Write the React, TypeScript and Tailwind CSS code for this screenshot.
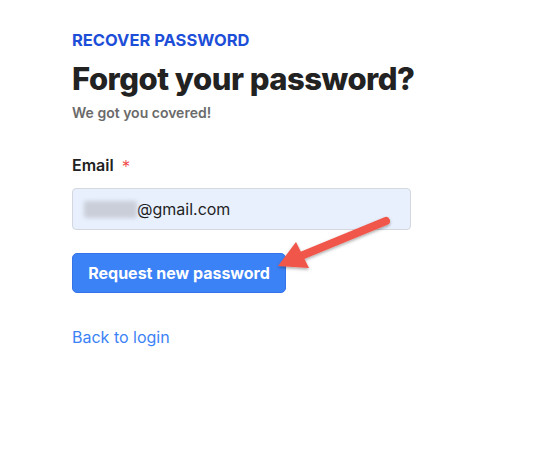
const App = () => {
  return (
    <div className="relative min-h-[454px] w-[550px] bg-white font-['Inter','Liberation_Sans',sans-serif]">
      <div className="flex w-[339px] flex-col ml-[72px] pt-[31px]">
        <p className="text-[16.5px] font-bold leading-[18px] text-[#1d4ed8]">RECOVER PASSWORD</p>
        <h1 className="mt-[10px] whitespace-nowrap text-[31px] font-extrabold leading-[40px] tracking-[-0.5px] text-[#222222]">
          Forgot your password?
        </h1>
        <p className="mt-[5px] text-[14px] font-semibold leading-[18px] text-[#6b6b6b]">We got you covered!</p>

        <label className="mt-[33px] flex h-[20px] items-center gap-[8px] text-[16px] font-semibold leading-[20px] text-[#222222]">
          Email <span className="translate-y-[2px] text-[17px] font-light leading-[20px] text-[#ef4444]">*</span>
        </label>
        <div className="mt-[13px] flex h-[42px] items-center rounded-[4px] border border-[#d4d8de] bg-[#e8f0fe] pl-[11px]">
          <span className="h-[17px] w-[53px] rounded-[2px] bg-[#c9ced8] blur-[2px]" />
          <span className="text-[16px] leading-[20px] text-[#1f1f1f]">@gmail.com</span>
        </div>

        <div className="mt-[23px]">
          <button className="h-[40px] w-[214px] rounded-[5px] border border-[#3574e8] bg-[#3b82f6] text-[16px] font-bold text-white">
            Request new password
          </button>
        </div>

        <a className="mt-[34px] text-[16px] leading-[20px] text-[#3b82f6]">Back to login</a>
      </div>

      <svg className="pointer-events-none absolute left-0 top-0" width="550" height="454">
        <defs>
          <filter id="sh" x="-20%" y="-20%" width="140%" height="140%">
            <feDropShadow dx="0" dy="1.5" stdDeviation="1.5" floodColor="#000" floodOpacity="0.35" />
          </filter>
        </defs>
        <g filter="url(#sh)">
          <line x1="386" y1="221" x2="296" y2="258" stroke="#f0564a" strokeWidth="8" strokeLinecap="round" />
          <polygon points="278,266 296,242 309,268" fill="#f0564a" />
        </g>
      </svg>
    </div>
  );
};

export default App;
